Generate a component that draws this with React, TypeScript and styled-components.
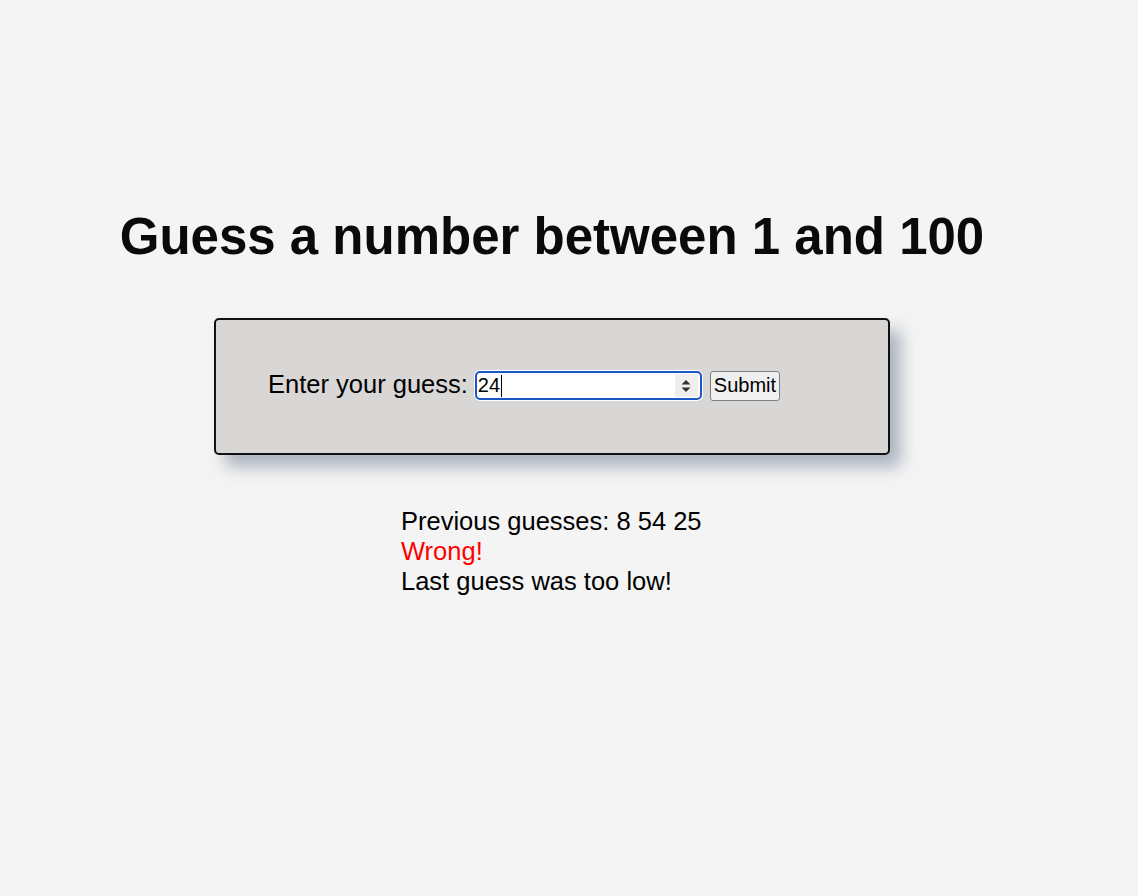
import React from "react";
import styled, { createGlobalStyle } from "styled-components";

const Global = createGlobalStyle`
  html, body { margin: 0; padding: 0; background: #f4f4f4; }
  body { font-family: "Liberation Sans", Arial, sans-serif; color: #000; }
`;

const Page = styled.div`
  width: 1104px;
  display: flex;
  flex-direction: column;
  align-items: center;
  padding-top: 204px;
`;

const Title = styled.h1`
  margin: 0;
  font-size: 51px;
  font-weight: bold;
  line-height: 66px;
  color: #0a0a0a;
`;

const Card = styled.div`
  margin-top: 48px;
  width: 676px;
  height: 137px;
  box-sizing: border-box;
  border: 2px solid #111;
  border-radius: 5px;
  background: #d8d7d6;
  box-shadow: 11px 12px 16px rgba(115, 128, 150, 0.55);
  display: flex;
  align-items: center;
  padding-left: 52px;
`;

const Form = styled.form`
  display: flex;
  align-items: center;
  gap: 8px;
  margin-top: -2px;
`;

const Label = styled.label`
  font-size: 25.5px;
  margin-top: -2px;
`;

const Field = styled.div`
  position: relative;
  width: 227px;
  height: 29px;
  box-sizing: border-box;
  border: 2px solid #1a56c4;
  border-radius: 5px;
  background: #fff;
  box-shadow: 0 0 0 1px #fff;
  display: flex;
  align-items: center;
  margin-left: -1px;
`;

const Input = styled.input`
  border: none;
  outline: none;
  background: transparent;
  font-family: "Liberation Sans", Arial, sans-serif;
  font-size: 20px;
  padding: 0 0 0 1px;
  width: 190px;
  color: #000;
`;

const Caret = styled.span`
  position: absolute;
  left: 24px;
  top: 2px;
  width: 1px;
  height: 22px;
  background: #000;
`;

const Spinner = styled.div`
  position: absolute;
  right: 2px;
  top: 1px;
  bottom: 1px;
  width: 23px;
  background: #eeeeee;
  display: flex;
  align-items: center;
  justify-content: center;
`;

const Button = styled.button`
  font-family: "Liberation Sans", Arial, sans-serif;
  font-size: 20px;
  height: 30px;
  padding: 0 3px;
  border: 1px solid #808080;
  border-radius: 3px;
  background: #f0f0f0;
  color: #000;
`;

const Results = styled.div`
  margin-top: 51px;
  width: 302px;
  font-size: 25.5px;
  line-height: 30px;
`;

const Line = styled.p<{ $tone?: string }>`
  margin: 0;
  white-space: nowrap;
  color: ${(p) => p.$tone || "#000"};
`;

export default function App() {
  return (
    <>
      <Global />
      <Page>
        <Title>Guess a number between 1 and 100</Title>
        <Card>
          <Form onSubmit={(e) => e.preventDefault()}>
            <Label htmlFor="guess">Enter your guess:</Label>
            <Field>
              <Input id="guess" type="text" defaultValue="24" readOnly />
              <Caret />
              <Spinner>
                <svg width="12" height="18" viewBox="0 0 12 18">
                  <path d="M6 3 L10.5 7.5 L1.5 7.5 Z" fill="#333" />
                  <path d="M6 15 L10.5 10.5 L1.5 10.5 Z" fill="#333" />
                </svg>
              </Spinner>
            </Field>
            <Button type="submit">Submit</Button>
          </Form>
        </Card>
        <Results>
          <Line>Previous guesses: 8 54 25</Line>
          <Line $tone="#ff0000">Wrong!</Line>
          <Line>Last guess was too low!</Line>
        </Results>
      </Page>
    </>
  );
}
